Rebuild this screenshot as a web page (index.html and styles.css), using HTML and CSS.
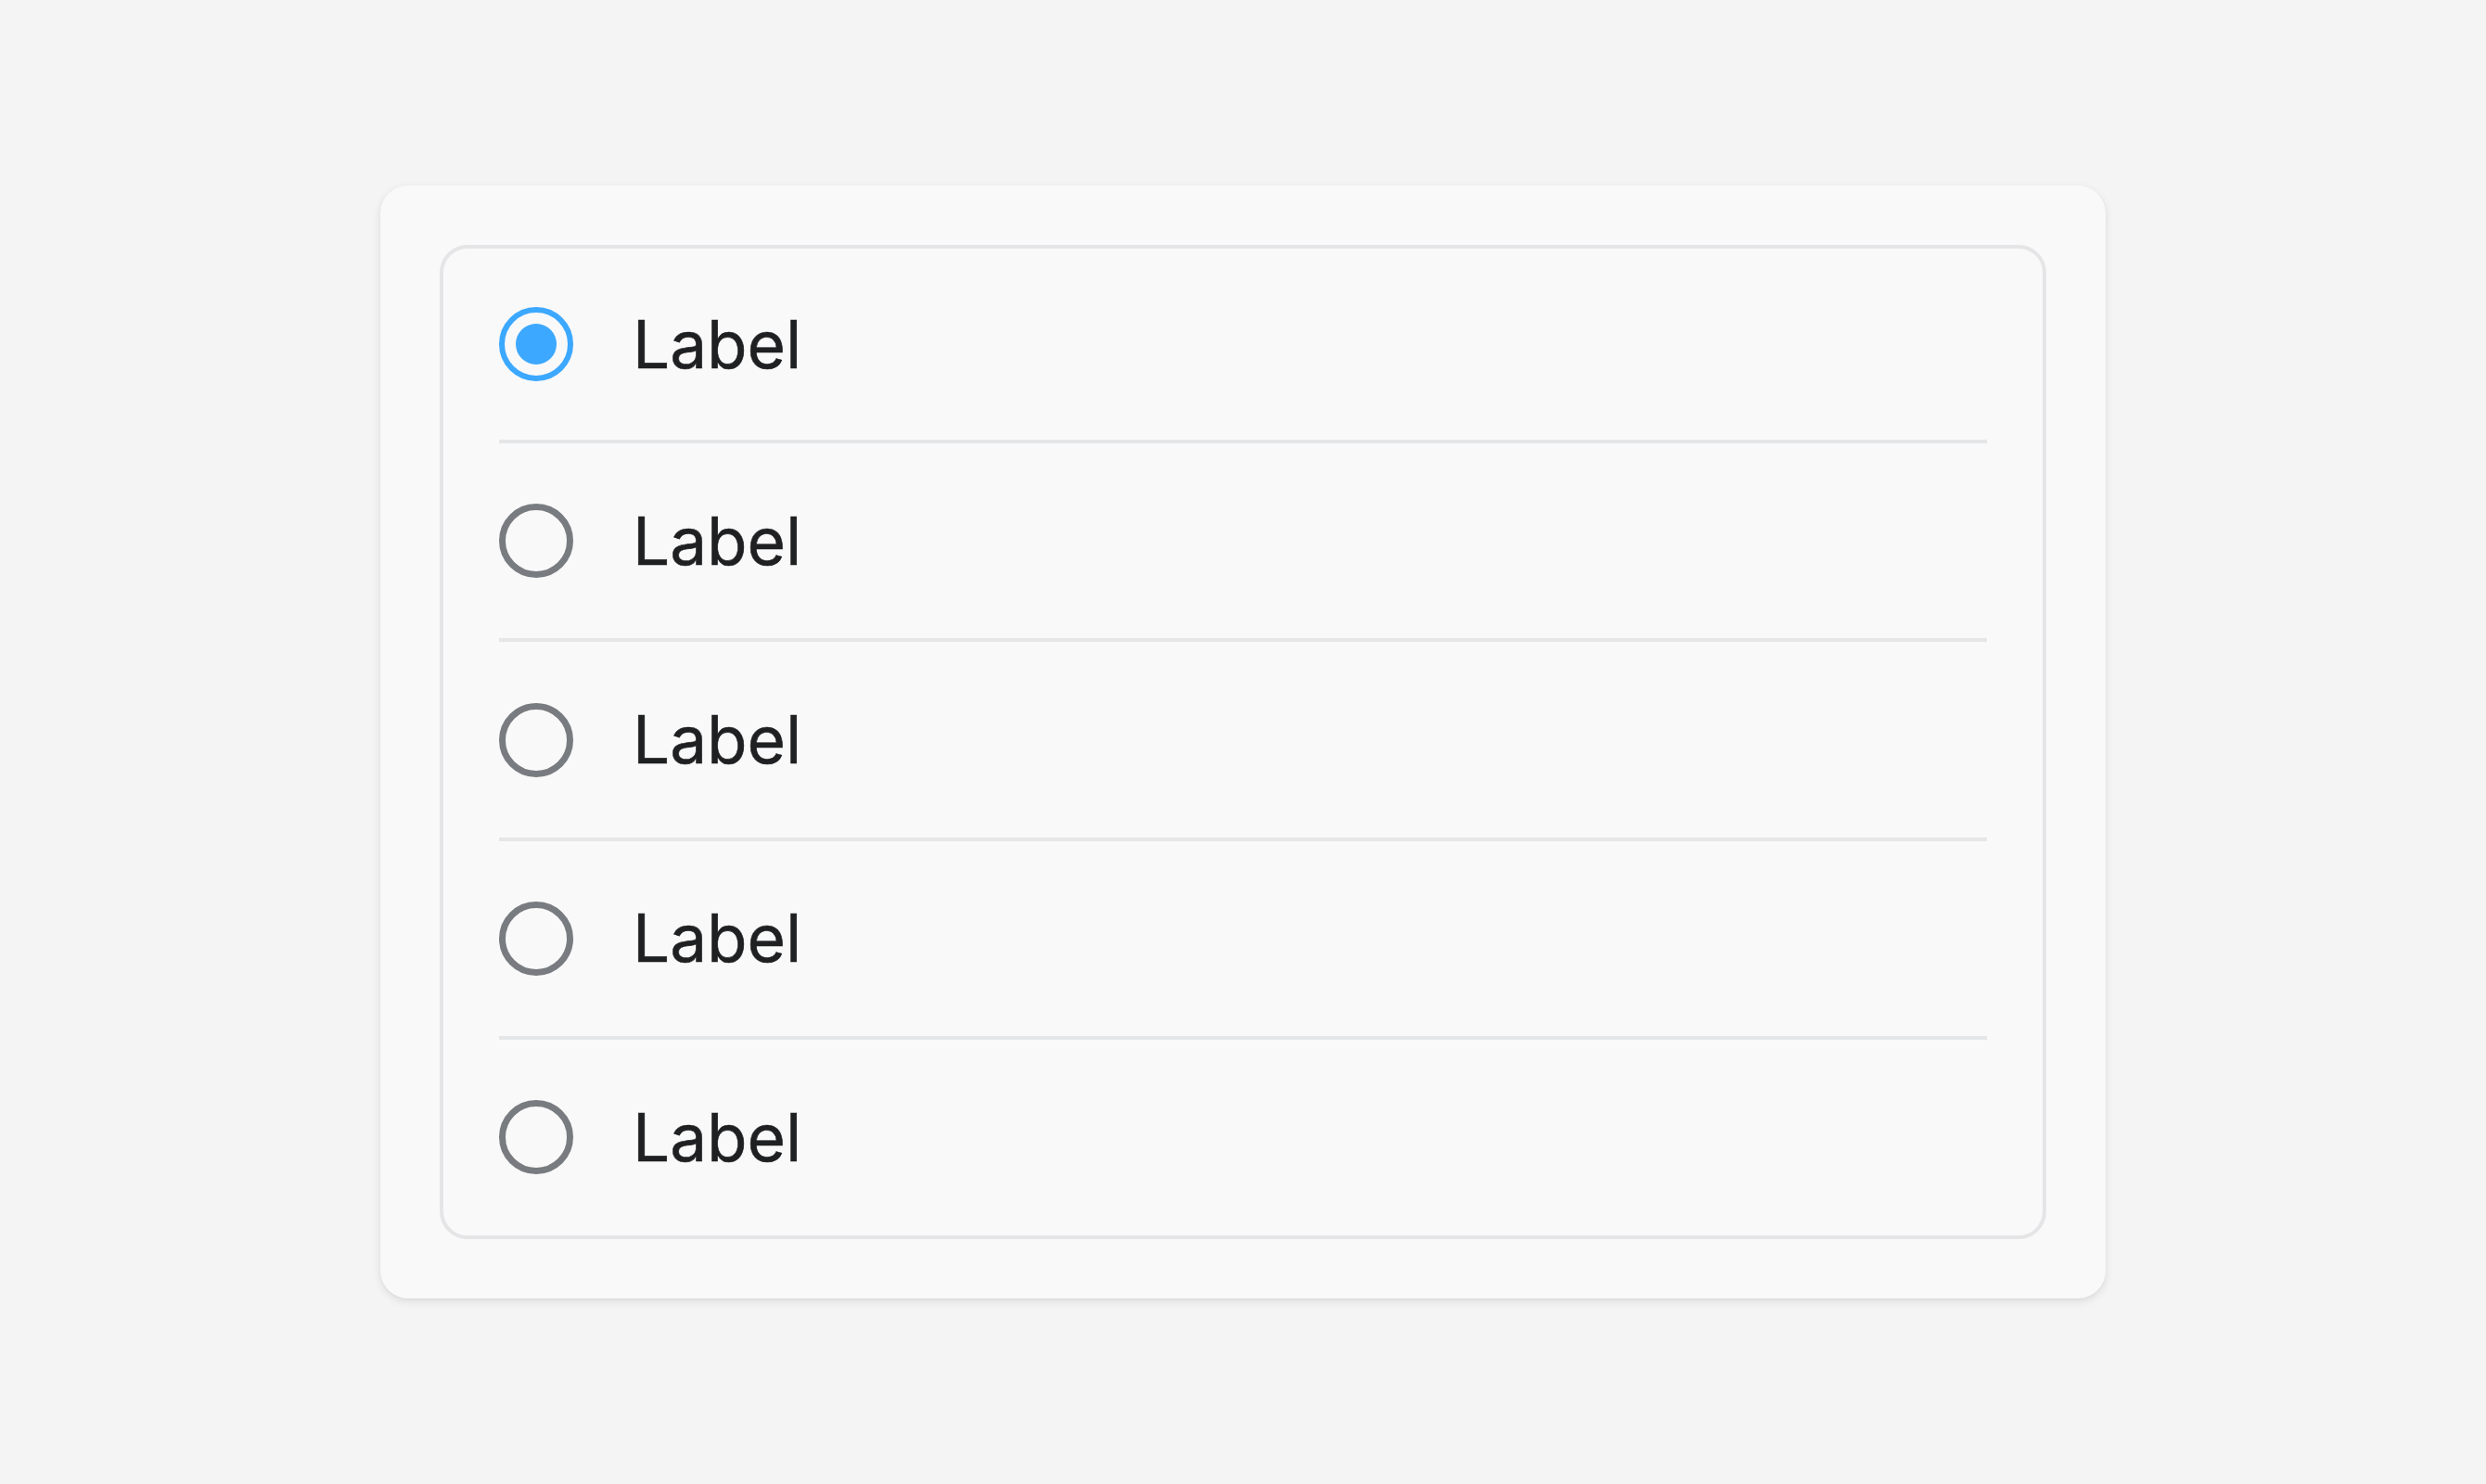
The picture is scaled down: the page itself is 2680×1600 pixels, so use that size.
FILE: index.html
```html
<!DOCTYPE html>
<html lang="en">
<head>
<meta charset="utf-8">
<title>Radio group</title>
<link rel="stylesheet" href="styles.css">
</head>
<body>
<main class="stage">
  <section class="card">
    <div class="group" role="radiogroup">
      <label class="item item--first">
        <span class="radio radio--checked"><span class="dot"></span></span>
        <span class="label">Label</span>
      </label>
      <label class="item">
        <span class="radio"></span>
        <span class="label">Label</span>
      </label>
      <label class="item">
        <span class="radio"></span>
        <span class="label">Label</span>
      </label>
      <label class="item">
        <span class="radio"></span>
        <span class="label">Label</span>
      </label>
      <label class="item">
        <span class="radio"></span>
        <span class="label">Label</span>
      </label>
    </div>
  </section>
</main>
</body>
</html>
```

FILE: styles.css
```css
* { box-sizing: border-box; }

html, body {
  margin: 0;
  padding: 0;
  background: #f4f4f4;
  font-family: Inter, "Noto Sans", "Liberation Sans", sans-serif;
}

.stage {
  width: 2680px;
  height: 1600px;
  display: flex;
  align-items: center;
  justify-content: center;
}

.card {
  width: 1860px;
  height: 1200px;
  padding: 64px;
  background: #f9f9f9;
  border-radius: 30px;
  box-shadow: 0 3px 10px rgba(0, 0, 0, 0.10), 0 1px 2px rgba(0, 0, 0, 0.04);
  display: flex;
}

.group {
  flex: 1;
  border: 4px solid #e5e5e7;
  border-radius: 30px;
  background: #f9f9f9;
  display: flex;
  flex-direction: column;
  padding: 0 60px;
}

.item {
  height: 214.4px;
  flex: none;
  display: flex;
  align-items: center;
  gap: 64px;
  border-bottom: 4px solid #e5e6e8;
}

.item--first {
  height: 210px;
}

.item:last-child {
  border-bottom: none;
  height: 210px;
}

.radio {
  width: 80px;
  height: 80px;
  border-radius: 50%;
  border: 7px solid #787c80;
  display: flex;
  align-items: center;
  justify-content: center;
  flex: none;
}

.radio--checked {
  border-width: 6px;
  border-color: #3ca8ff;
}

.dot {
  width: 44px;
  height: 44px;
  border-radius: 50%;
  background: #3ca8ff;
}

.label {
  font-size: 71px;
  line-height: 1;
  color: #1f2022;
  font-weight: 400;
  -webkit-text-stroke: 0.6px #1f2022;
}
```
